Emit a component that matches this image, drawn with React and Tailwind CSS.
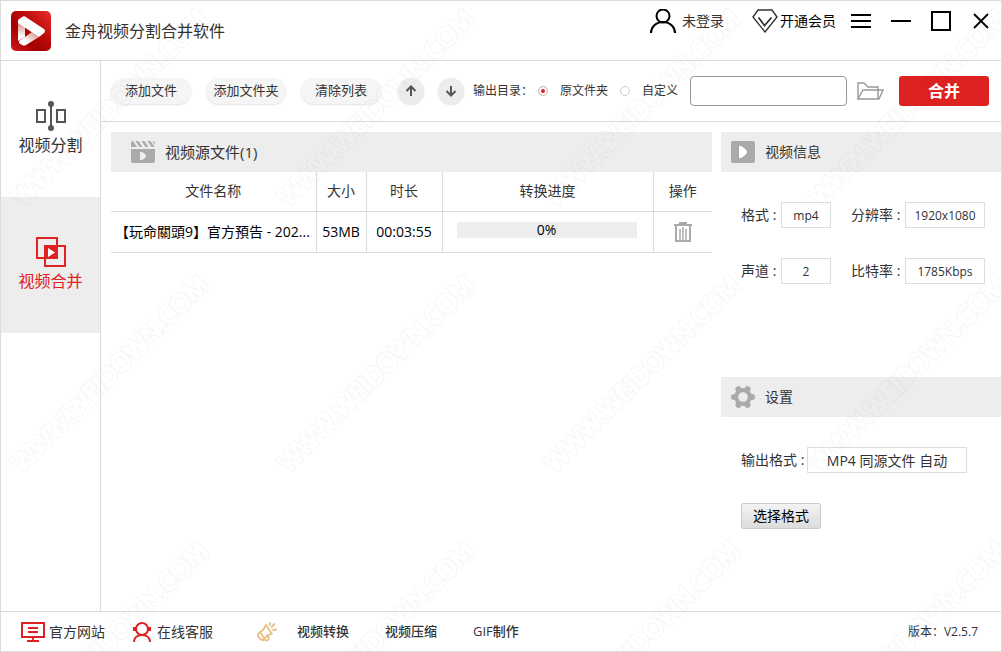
import { useState } from 'react';

// ============================================================
// ICONS
// ============================================================

const IconLogo = () => (
  <svg className="w-10 h-10 shrink-0" viewBox="0 0 40 40">
    <defs>
      <linearGradient id="logoBg" x1="0" y1="1" x2="1" y2="0">
        <stop offset="0" stopColor="#d31a1c" />
        <stop offset="0.35" stopColor="#a30000" />
        <stop offset="0.6" stopColor="#b80a0b" />
        <stop offset="1" stopColor="#ea2f2c" />
      </linearGradient>
      <linearGradient id="logoSide" x1="0" y1="1" x2="0" y2="0">
        <stop offset="0.2" stopColor="#fff" />
        <stop offset="1" stopColor="#d98280" />
      </linearGradient>
      <linearGradient id="logoBottom" x1="0" y1="1" x2="1" y2="0">
        <stop offset="0.3" stopColor="#fff" />
        <stop offset="1" stopColor="#d98280" />
      </linearGradient>
    </defs>
    <rect width="40" height="40" rx="5" fill="url(#logoBg)" />
    <path d="M7 11l7 4v11l-7 4z" fill="url(#logoSide)" />
    <path d="M8 30l13-9 7 5-13 8q-2 1-4 0l-3-2z" fill="url(#logoBottom)" />
    <path d="M11 6q1.500-1 3-.5L33 18q2 2 0 4l-5 4L7 12V9z" fill="#fff" />
  </svg>
);

const IconUser = () => (
  <svg className="w-[26px] h-6 shrink-0" viewBox="0 0 26 24" fill="none" stroke="#000" strokeWidth="2">
    <circle cx="13" cy="7" r="6.500" />
    <path d="M1 24c0-6 5-11 12-11s12 5 12 11" />
  </svg>
);

const IconDiamond = () => (
  <svg className="w-[26px] h-6 shrink-0" viewBox="0 0 26 24" fill="none" stroke="#333" strokeWidth="1.400">
    <path d="M6 1h14l5 7-12 15L1 8z" />
    <path d="M6.500 8.500l6 8 7-8" strokeWidth="1.800" />
  </svg>
);

const IconMenu = () => (
  <svg className="w-5 h-5" viewBox="0 0 20 20" stroke="#000" strokeWidth="2">
    <path d="M0 4h20M0 10h20M0 16h20" />
  </svg>
);

const IconMinimize = () => (
  <svg className="w-5 h-5" viewBox="0 0 20 20" stroke="#000" strokeWidth="2">
    <path d="M0 10h20" />
  </svg>
);

const IconMaximize = () => (
  <svg className="w-5 h-5" viewBox="0 0 20 20" fill="none" stroke="#000" strokeWidth="2">
    <rect x="1" y="1" width="18" height="18" />
  </svg>
);

const IconClose = () => (
  <svg className="w-5 h-5" viewBox="0 0 20 20" stroke="#000" strokeWidth="1.800">
    <path d="M3 3l14 14M17 3L3 17" />
  </svg>
);

const IconSplit = () => (
  <svg className="w-[30px] h-[30px]" viewBox="0 0 30 30" fill="none" stroke="#555" strokeWidth="2">
    <rect x="1" y="9" width="8" height="12" />
    <rect x="21" y="9" width="8" height="12" />
    <path d="M15 3v24" />
    <circle cx="15" cy="3" r="3" fill="#555" stroke="none" />
    <circle cx="15" cy="27" r="3" fill="#555" stroke="none" />
  </svg>
);

const IconMerge = () => (
  <svg className="w-[30px] h-[30px]" viewBox="0 0 30 30" fill="none" stroke="#dd2221" strokeWidth="2">
    <rect x="1" y="1" width="20" height="20" />
    <rect x="9" y="9" width="20" height="20" />
    <rect x="9" y="9" width="12" height="12" fill="#dd2221" />
    <path d="M12 11l7 4.500-7 4.500z" fill="#fff" stroke="none" />
  </svg>
);

const IconArrowUp = () => (
  <svg className="w-3 h-3" viewBox="0 0 12 12" fill="none" stroke="#555" strokeWidth="2">
    <path d="M6 11V2M1.500 6L6 1.500 10.500 6" />
  </svg>
);

const IconArrowDown = () => (
  <svg className="w-3 h-3" viewBox="0 0 12 12" fill="none" stroke="#555" strokeWidth="2">
    <path d="M6 1v9M1.500 6L6 10.500 10.500 6" />
  </svg>
);

const IconFolder = () => (
  <svg className="w-[27px] h-[18px]" viewBox="0 0 27 18" fill="none" stroke="#999" strokeWidth="1.400">
    <path d="M1 17V1h6l4 4h10v12" />
    <path d="M1 17L6 8h20l-4 9z" />
  </svg>
);

const IconClapper = () => (
  <svg className="w-6 h-[22px]" viewBox="0 0 24 22" fill="#aaa">
    <path d="M0 6V2q0-2 2-2l4 6zM4.500 0h3l4 6h-3zM10.500 0h3l4 6h-3zM16.500 0h3l4 6h-3zM21.500 0q2.500 0 2.500 2v2z" />
    <path fillRule="evenodd" d="M0 8h24v12q0 2-2 2H2q-2 0-2-2zM9 11v8h2q4-2 4-4t-4-4z" />
  </svg>
);

const IconPlayBox = () => (
  <svg className="w-6 h-[22px]" viewBox="0 0 24 22">
    <rect width="24" height="22" rx="2" fill="#aaa" />
    <path d="M8 5h2q6 3.500 6 6t-6 6H8z" fill="#fff" />
  </svg>
);

const IconGear = () => (
  <svg className="w-6 h-[22px]" viewBox="0 0 24 22">
    <circle cx="12" cy="11" r="9" fill="#aaa" />
    <path d="M3 11h18M7.500 3.200l9 15.600M16.500 3.200l-9 15.600" stroke="#aaa" strokeWidth="6" strokeLinecap="round" />
    <circle cx="12" cy="11" r="4.800" fill="#ededed" />
  </svg>
);

const IconTrash = () => (
  <svg className="w-[18px] h-5" viewBox="0 0 18 20" fill="none" stroke="#aaa" strokeWidth="2">
    <path d="M0 3h18M5 1h8M2 3v16h14V3" />
    <path d="M6 7v11M9 5v13M12 7v11" strokeWidth="1.500" />
  </svg>
);

const IconMonitor = () => (
  <svg className="w-6 h-5" viewBox="0 0 24 20" fill="none" stroke="#dd2221" strokeWidth="2">
    <rect x="1" y="1" width="22" height="14" />
    <path d="M7 6h10M7 10h10M12 15v4M6 19h12" strokeWidth="1.800" />
  </svg>
);

const IconSupport = () => (
  <svg className="w-[18px] h-5" viewBox="0 0 18 20" fill="none" stroke="#dd2221" strokeWidth="2">
    <circle cx="9" cy="7" r="6" />
    <path d="M1 20c0-4 3-7 8-7s8 3 8 7" />
    <path d="M1.500 5v4M16.500 5v4" strokeWidth="3" />
  </svg>
);

const IconHorn = () => (
  <svg className="w-5 h-5" viewBox="0 0 20 20" fill="none" stroke="#e9bd83" strokeWidth="1.800" strokeLinejoin="round" strokeLinecap="round">
    <path d="M9 3l6 9-4 1-5 5q-3 0-5-4-.3-2 1-3l4-3z" />
    <path d="M3 10l4 6M11 14q1.500 3-.5 4.500-2 .5-3.500-1.500M12.500 3l.5-2M14.500 5l3-3M16 8l3-.5" />
  </svg>
);

// ============================================================
// WATERMARK
// ============================================================

const WatermarkText = (props) => (
  <text
    transform="translate(22 206) rotate(-45)"
    fontFamily="Open Sans, sans-serif"
    fontSize="25"
    strokeLinejoin="round"
    {...props}
  >
    WWW.WEIDOWN.COM
  </text>
);

const Watermark = () => (
  <svg className="absolute inset-0 w-full h-full pointer-events-none" aria-hidden="true">
    <defs>
      <mask id="outline" maskUnits="userSpaceOnUse" x="0" y="0" width="266" height="266">
        <WatermarkText fill="#fff" stroke="#fff" strokeWidth="4" />
        <WatermarkText fill="#000" stroke="#000" strokeWidth="2" />
      </mask>
      <pattern id="watermark" width="266" height="266" patternUnits="userSpaceOnUse">
        <rect width="266" height="266" fill="#000" fillOpacity="0.036" mask="url(#outline)" />
      </pattern>
    </defs>
    <rect width="100%" height="100%" fill="url(#watermark)" />
  </svg>
);

// ============================================================
// SHARED PIECES
// ============================================================

const PillButton = ({ children }) => (
  <button className="w-20 h-[26px] rounded-full bg-[#f5f5f5] shadow-[0_1px_2px_rgba(0,0,0,0.12)] text-[13px]">
    {children}
  </button>
);

const RoundButton = ({ label, children }) => (
  <button
    aria-label={label}
    className="w-[26px] h-[26px] rounded-full bg-[#ededed] shadow-[0_1px_2px_rgba(0,0,0,0.12)] flex items-center justify-center"
  >
    {children}
  </button>
);

const TargetRadio = ({ checked, onChange, children }) => (
  <label className="flex items-center gap-3">
    <input
      type="radio"
      name="target"
      checked={checked}
      onChange={onChange}
      className="appearance-none w-2.5 h-2.5 rounded-full border border-[#ccc] checked:bg-[#dd2221] checked:shadow-[inset_0_0_0_2px_#fff]"
    />
    {children}
  </label>
);

const PanelTitle = ({ icon, children }) => (
  <h2 className="h-10 bg-[#ededed] flex items-center gap-2.5 px-2.5 text-sm">
    {icon}
    {children}
  </h2>
);

const Field = ({ id, label, value, labelClass, inputClass }) => (
  <div className="flex items-center">
    <label htmlFor={id} className={`text-sm whitespace-nowrap ${labelClass}`}>{label} :</label>
    <input
      id={id}
      readOnly
      value={value}
      className={`h-[26px] border border-[#ddd] bg-white text-center outline-none ${inputClass}`}
    />
  </div>
);

const files = [
  { name: '【玩命關頭9】官方預告 - 202...', size: '53MB', duration: '00:03:55', progress: 0 },
];

// ============================================================
// MAIN COMPONENT
// ============================================================

export default function App() {
  const [target, setTarget] = useState('source');
  const [path, setPath] = useState('');

  return (
    <div className="relative min-h-screen flex flex-col border border-[#dcdcdc] bg-white text-[#333] font-['Open_Sans','Noto_Sans_CJK_SC',sans-serif]">
      {/* Title bar */}
      <header className="h-[60px] shrink-0 border-b border-[#dcdcdc] flex items-center justify-between px-2.5">
        <div className="flex items-center gap-3.5">
          <IconLogo />
          <h1 className="text-base">金舟视频分割合并软件</h1>
        </div>
        <div className="flex items-center self-start h-10 text-sm">
          <button className="flex items-center gap-1.5 mr-7">
            <IconUser />
            未登录
          </button>
          <button className="flex items-center gap-0.5 mr-[15px] text-black">
            <IconDiamond />
            开通会员
          </button>
          <div className="flex items-center gap-5">
            <button aria-label="菜单"><IconMenu /></button>
            <button aria-label="最小化"><IconMinimize /></button>
            <button aria-label="最大化"><IconMaximize /></button>
            <button aria-label="关闭"><IconClose /></button>
          </div>
        </div>
      </header>

      <div className="flex flex-1">
        {/* Sidebar */}
        <nav className="w-[100px] shrink-0 border-r border-[#dcdcdc] text-base">
          <a href="#split" className="h-[136px] flex flex-col items-center justify-center gap-0.5">
            <IconSplit />
            视频分割
          </a>
          <a href="#merge" className="h-[136px] flex flex-col items-center justify-center gap-0.5 bg-[#ededed] text-[#dd2221]">
            <IconMerge />
            视频合并
          </a>
        </nav>

        <main className="flex-1 min-w-0">
          {/* Toolbar */}
          <div className="h-[61px] border-b border-[#dcdcdc] flex items-center pl-2.5 pr-3 text-xs">
            <div className="flex gap-[15px]">
              <PillButton>添加文件</PillButton>
              <PillButton>添加文件夹</PillButton>
              <PillButton>清除列表</PillButton>
            </div>
            <div className="flex gap-3.5 ml-[17px]">
              <RoundButton label="上移"><IconArrowUp /></RoundButton>
              <RoundButton label="下移"><IconArrowDown /></RoundButton>
            </div>
            <div className="flex items-center gap-3 ml-[9px] whitespace-nowrap">
              <span className="w-[53px]">输出目录：</span>
              <TargetRadio checked={target === 'source'} onChange={() => setTarget('source')}>
                原文件夹
              </TargetRadio>
              <TargetRadio checked={target === 'custom'} onChange={() => setTarget('custom')}>
                自定义
              </TargetRadio>
            </div>
            <input
              aria-label="输出目录"
              value={path}
              onChange={(e) => setPath(e.target.value)}
              className="flex-1 min-w-0 h-[30px] ml-3 px-2 border border-[#999] rounded outline-none"
            />
            <button aria-label="浏览" className="mx-2.5 w-8"><IconFolder /></button>
            <button className="w-[90px] h-[30px] rounded-[3px] bg-[#dd2221] text-white text-base font-bold">合并</button>
          </div>

          <div className="flex gap-[9px] pt-2.5 pl-2.5">
            {/* File list */}
            <section className="flex-1 min-w-0">
              <h2 className="h-10 bg-[#ededed] flex items-center gap-2.5 px-5 text-[15px]">
                <IconClapper />
                视频源文件(1)
              </h2>
              <table className="w-full table-fixed text-sm text-center whitespace-nowrap">
                <thead>
                  <tr className="h-[39px] border-b border-[#dcdcdc]">
                    <th className="font-normal border-r border-[#dcdcdc]">文件名称</th>
                    <th className="w-[50px] font-normal border-r border-[#dcdcdc]">大小</th>
                    <th className="w-[76px] font-normal border-r border-[#dcdcdc]">时长</th>
                    <th className="w-[211px] font-normal border-r border-[#dcdcdc]">转换进度</th>
                    <th className="w-[59px] font-normal">操作</th>
                  </tr>
                </thead>
                <tbody className="text-black">
                  {files.map((file) => (
                    <tr key={file.name} className="h-[41px] border-b border-[#dcdcdc]">
                      <td className="border-r border-[#dcdcdc] text-left pl-1 overflow-hidden">{file.name}</td>
                      <td className="border-r border-[#dcdcdc]">{file.size}</td>
                      <td className="border-r border-[#dcdcdc]">{file.duration}</td>
                      <td className="border-r border-[#dcdcdc] pl-3.5 pr-4 pb-1">
                        <div className="grid h-4 bg-[#ededed]" role="progressbar" aria-label="转换进度" aria-valuenow={file.progress}>
                          <div className="col-start-1 row-start-1 h-4 bg-[#dd2221]" style={{ width: `${file.progress}%` }} />
                          <span className="col-start-1 row-start-1 leading-4">{file.progress}%</span>
                        </div>
                      </td>
                      <td>
                        <button aria-label="删除" className="block mx-auto"><IconTrash /></button>
                      </td>
                    </tr>
                  ))}
                </tbody>
              </table>
            </section>

            <aside className="w-[280px] shrink-0">
              {/* Video info */}
              <section className="h-[245px]">
                <PanelTitle icon={<IconPlayBox />}>视频信息</PanelTitle>
                <div className="px-5 pt-[30px] flex flex-col gap-[30px]">
                  <div className="flex gap-5">
                    <Field id="format" label="格式" value="mp4" labelClass="w-10" inputClass="w-[50px] text-xs" />
                    <Field id="resolution" label="分辨率" value="1920x1080" labelClass="w-[54px]" inputClass="w-20 text-xs" />
                  </div>
                  <div className="flex gap-5">
                    <Field id="channels" label="声道" value="2" labelClass="w-10" inputClass="w-[50px] text-xs" />
                    <Field id="bitrate" label="比特率" value="1785Kbps" labelClass="w-[54px]" inputClass="w-20 text-xs" />
                  </div>
                </div>
              </section>

              {/* Settings */}
              <section>
                <PanelTitle icon={<IconGear />}>设置</PanelTitle>
                <div className="px-5 pt-[30px] flex flex-col items-start gap-[30px]">
                  <Field id="output" label="输出格式" value="MP4 同源文件 自动" labelClass="w-[66px]" inputClass="w-40 text-sm" />
                  <button className="w-20 h-[26px] rounded-xs border border-[#ccc] bg-linear-to-b from-[#f3f3f3] to-[#dcdcdc] text-sm leading-6 text-black">
                    选择格式
                  </button>
                </div>
              </section>
            </aside>
          </div>
        </main>
      </div>

      {/* Footer */}
      <footer className="h-10 shrink-0 border-t border-[#dcdcdc] flex items-center pl-5 pr-[23px] text-sm">
        <a href="#site" className="flex items-center gap-1 mr-7">
          <IconMonitor />
          官方网站
        </a>
        <a href="#support" className="flex items-center gap-1.5 mr-11">
          <IconSupport />
          在线客服
        </a>
        <div className="flex items-center gap-5 text-[13px] font-medium">
          <IconHorn />
          <div className="flex gap-9">
            <a href="#convert">视频转换</a>
            <a href="#compress">视频压缩</a>
            <a href="#gif">GIF制作</a>
          </div>
        </div>
        <span className="ml-auto text-xs">版本：V2.5.7</span>
      </footer>

      <Watermark />
    </div>
  );
}
